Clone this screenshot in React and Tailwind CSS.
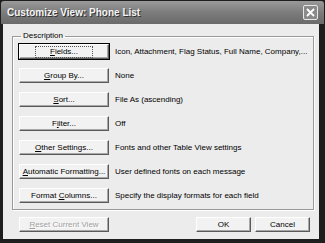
import React from 'react';

const rows = [
  { pre: '', key: 'F', post: 'ields...', desc: 'Icon, Attachment, Flag Status, Full Name, Company,...', focus: true },
  { pre: '', key: 'G', post: 'roup By...', desc: 'None' },
  { pre: '', key: 'S', post: 'ort...', desc: 'File As (ascending)' },
  { pre: 'F', key: 'i', post: 'lter...', desc: 'Off' },
  { pre: '', key: 'O', post: 'ther Settings...', desc: 'Fonts and other Table View settings' },
  { pre: '', key: 'A', post: 'utomatic Formatting...', desc: 'User defined fonts on each message' },
  { pre: 'Format ', key: 'C', post: 'olumns...', desc: 'Specify the display formats for each field' },
];

function Btn({ children, focus, disabled, className = '' }) {
  return (
    <button
      className={`h-[15px] flex items-center justify-center bg-[#f2f2f2] border border-t-white border-l-white border-b-[#5a5a5a] border-r-[#5a5a5a] shadow-[inset_-1px_-1px_0_#a8a8a8] ${
        focus ? 'outline outline-1 outline-black' : ''
      } ${disabled ? 'text-[#a0a0a0]' : 'text-black'} ${className}`}
    >
      <span className={focus ? 'px-[14px] border border-dotted border-[#555] leading-[10px]' : ''}>{children}</span>
    </button>
  );
}

export default function App() {
  return (
    <div className="w-[325px] h-[243px] bg-[#1e1e1e] flex flex-col overflow-hidden font-['Liberation_Sans',Arial,sans-serif] text-[8px] text-black">
      {/* title bar */}
      <div className="h-[23px] mx-[1px] mt-[1px] flex items-center justify-between pl-[6px] pr-[6px] bg-gradient-to-b from-[#9a9a9a] via-[#7c7c7c] to-[#6a6a6a] rounded-t-[3px]">
        <span className="text-[10px] font-bold text-[#f4f4f4] [text-shadow:1px_1px_0_#333]">Customize View: Phone List</span>
        <div className="w-[15px] h-[15px] border border-[#e8e8e8] rounded-[2px] bg-[#8a8a8a] flex items-center justify-center">
          <svg width="9" height="9" viewBox="0 0 9 9">
            <path d="M1 1 L8 8 M8 1 L1 8" stroke="#fff" strokeWidth="1.8" />
          </svg>
        </div>
      </div>

      {/* body */}
      <div className="flex-1 ml-[3px] mr-[6px] mb-[4px] bg-[#ececec] flex flex-col px-[9px] pt-[7px]">
        <fieldset className="border border-[#9a9a9a] shadow-[1px_1px_0_#fff,inset_1px_1px_0_#fff] px-[6px] pt-[3px] pb-[6px] flex flex-col gap-[9px]">
          <legend className="px-[2px] ml-[2px] leading-[10px]">Description</legend>
          {rows.map((r) => (
            <div key={r.desc} className="flex items-center gap-[6px]">
              <Btn focus={r.focus} className="w-[90px]">
                {r.pre}<u>{r.key}</u>{r.post}
              </Btn>
              <span className="whitespace-nowrap">{r.desc}</span>
            </div>
          ))}
        </fieldset>
        <div className="flex items-center mt-[7px] pl-[7px] pr-[0px]">
          <Btn disabled className="w-[90px] [text-shadow:1px_1px_0_#fff]">
            <u>R</u>eset Current View
          </Btn>
          <div className="flex-1" />
          <Btn className="w-[55px]">OK</Btn>
          <Btn className="w-[55px] ml-[4px]">Cancel</Btn>
        </div>
      </div>
    </div>
  );
}
